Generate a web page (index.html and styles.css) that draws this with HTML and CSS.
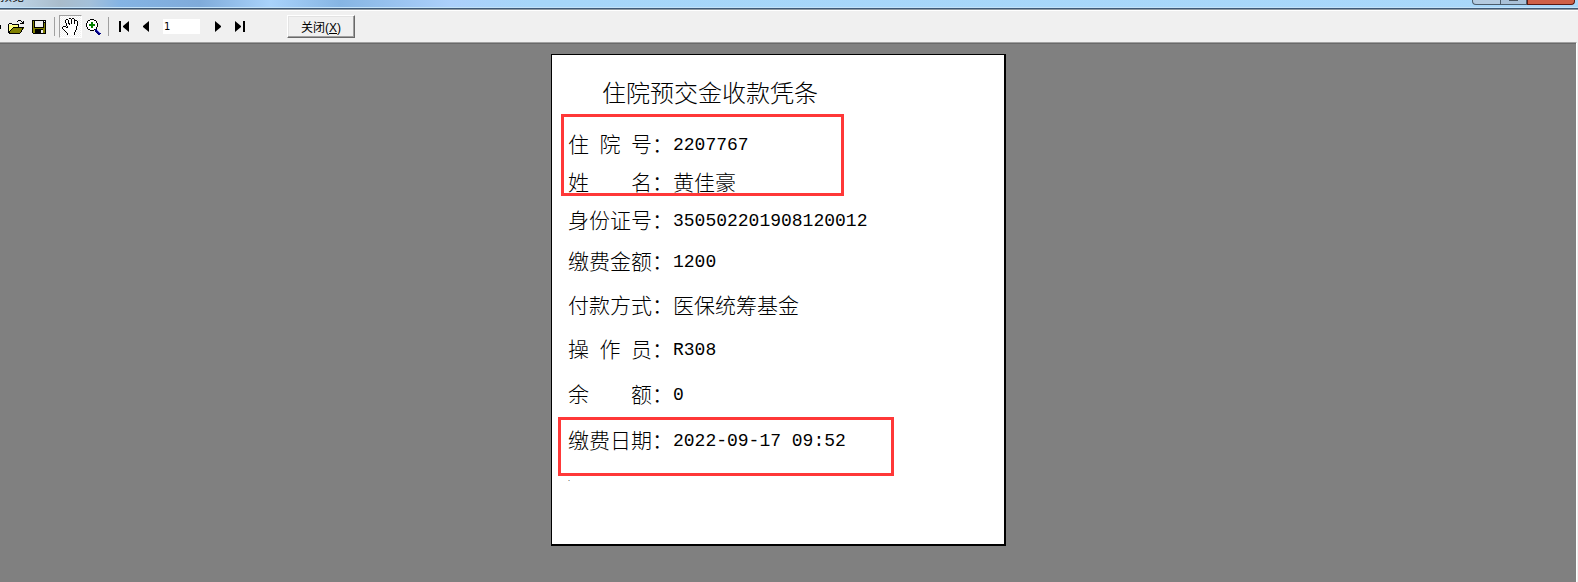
FILE: index.html
```
<!DOCTYPE html>
<html lang="zh-CN">
<head>
    <meta charset="UTF-8">
    <meta name="viewport" content="width=device-width, initial-scale=1.0">
    <title>预览</title>
    <link rel="stylesheet" href="styles.css">
</head>

<body>
    <header class="titlebar">
        <span class="caption">预览</span>
        <div class="window-buttons">
            <button class="win-btn" aria-label="最小化"></button>
            <button class="win-btn win-max" aria-label="最大化"></button>
            <button class="win-btn win-close" aria-label="关闭窗口"></button>
        </div>
    </header>

    <div class="toolbar">
        <span class="tool-edge"></span>
        <button class="tool" aria-label="打开">
            <svg width="16" height="14" viewBox="0 0 16 14" shape-rendering="crispEdges">
                <path d="M1 5h3l1-1h5v3h-5l-4 6z" fill="#ffff80"/>
                <path d="M5 8h11l-4 5h-11z" fill="#808000"/>
                <path d="M0 4h1v9h-1zM1 3h3v1h-3zM4 4h6v1h-6zM10 4h1v3h-1zM5 7h11v1h-11zM4 8h1v1h-1zM3 9h1v1h-1zM2 10h1v1h-1zM1 11h1v2h-1zM1 13h11v1h-11zM14 8h1v2h-1zM13 10h1v2h-1zM12 12h1v1h-1zM9 1h1v1h-1zM10 0h3v1h-3zM13 1h1v1h-1zM14 2h1v2h-1zM12 3h3v1h-3zM15 1h1v3h-1z" fill="#000"/>
            </svg>
        </button>
        <button class="tool" aria-label="保存">
            <svg width="14" height="14" viewBox="0 0 14 14" shape-rendering="crispEdges">
                <path d="M0 0h14v14h-13l-1-1z" fill="#000"/>
                <path d="M1 1h1v7h10v-5h1v10h-12z" fill="#808000"/>
                <path d="M3 1h8v6h-8zM12 1h1v1h-1z" fill="#f0f0f0"/>
                <path d="M3 9h8v5h-8z" fill="#000"/>
                <path d="M9 10h2v3h-2z" fill="#f0f0f0"/>
            </svg>
        </button>
        <span class="separator"></span>
        <button class="tool tool-pressed" aria-label="移动">
            <svg width="17" height="17" viewBox="0 0 17 17" shape-rendering="crispEdges">
                <path d="M4 2h2v1h1v-2h2v1h2v-1h2v2h2v2h1v6h-1v3h-1v3h-8v-2l-5-5v-2h3z" fill="#fff"/>
                <path d="M4 1h2v1h-2zM3 2h1v3h-1zM6 2h1v4h-1zM7 0h2v1h-2zM9 1h1v5h-1zM10 0h2v1h-2zM12 1h1v5h-1zM13 2h2v1h-2zM15 3h1v5h-1zM4 5h1v3h-1zM7 5h1v2h-1zM5 8h1v2h-1zM1 8h3v1h-3zM0 9h1v2h-1zM4 9h1v1h-1zM1 11h1v1h-1zM2 12h1v1h-1zM3 13h1v1h-1zM4 14h1v1h-1zM5 15h1v2h-1zM14 8h1v4h-1zM13 12h1v2h-1zM12 14h1v3h-1z" fill="#000"/>
            </svg>
        </button>
        <button class="tool tool-zoom" aria-label="放大">
            <svg width="16" height="16" viewBox="0 0 16 16" shape-rendering="crispEdges">
                <path d="M4 1h4v1h2v2h1v4h-1v2h-2v1h-4v-1h-2v-2h-1v-4h1v-2h2z" fill="#fff"/>
                <path d="M4 0h4v1h-4zM2 1h2v1h-2zM8 1h2v1h-2zM1 2h1v2h-1zM10 2h1v2h-1zM0 4h1v4h-1zM11 4h1v4h-1zM1 8h1v2h-1zM10 8h1v2h-1zM2 10h2v1h-2zM8 10h2v1h-2zM4 11h4v1h-4z" fill="#000"/>
                <path d="M5 3h2v2h2v2h-2v2h-2v-2h-2v-2h2z" fill="#008000"/>
                <path d="M9 10h2v1h1v1h1v1h1v1h1v1h-1v1h-2v-1h-1v-1h-1v-1h-1z" fill="#000080"/>
                <path d="M11 11h1v1h1v1h1v1h-1v-1h-1v-1h-1z" fill="#8080ff"/>
            </svg>
        </button>
        <span class="separator"></span>
        <button class="tool nav-first" aria-label="首页">
            <svg width="11" height="11" viewBox="0 0 11 11">
                <path d="M0 0h2v11h-2zM10 0v11l-6-5v-1z"/>
            </svg>
        </button>
        <button class="tool nav-prev" aria-label="上一页">
            <svg width="6" height="11" viewBox="0 0 6 11">
                <path d="M6 0v11l-6-5v-1z"/>
            </svg>
        </button>
        <input class="page-number" type="text" value="1" aria-label="页码">
        <button class="tool nav-next" aria-label="下一页">
            <svg width="6" height="11" viewBox="0 0 6 11">
                <path d="M0 0v11l6-5v-1z"/>
            </svg>
        </button>
        <button class="tool nav-last" aria-label="末页">
            <svg width="11" height="11" viewBox="0 0 11 11">
                <path d="M0 0v11l6-5v-1zM8 0h2v11h-2z"/>
            </svg>
        </button>
        <button class="close-preview" accesskey="x">关闭(<u>X</u>)</button>
    </div>

    <main class="preview">
        <article class="paper">
            <h1>住院预交金收款凭条</h1>
            <dl class="receipt">
                <div class="line"><dt>住  院  号：</dt><dd>2207767</dd></div>
                <div class="line"><dt>姓        名：</dt><dd class="hanzi">黄佳豪</dd></div>
                <div class="line"><dt>身份证号：</dt><dd>350502201908120012</dd></div>
                <div class="line tall"><dt>缴费金额：</dt><dd>1200</dd></div>
                <div class="line tall"><dt>付款方式：</dt><dd class="hanzi">医保统筹基金</dd></div>
                <div class="line tall"><dt>操  作  员：</dt><dd>R308</dd></div>
                <div class="line last"><dt>余        额：</dt><dd>0</dd></div>
                <div class="line last"><dt>缴费日期：</dt><dd>2022-09-17 09:52</dd></div>
            </dl>
            <p class="end-mark">.</p>
            <div class="mark mark-patient"></div>
            <div class="mark mark-date"></div>
        </article>
    </main>
</body>
</html>
```
FILE: styles.css
```
* {
    box-sizing: border-box;
}

body {
    margin: 0;
    height: 100vh;
    display: flex;
    flex-direction: column;
    background-color: #f0f0f0;
    font-family: "Liberation Sans", "Noto Sans CJK SC", sans-serif;
    font-size: 12px;
    color: #000;
    overflow: hidden;
}

button {
    padding: 0;
    border: none;
    background: none;
    font: inherit;
    color: inherit;
}

/* window frame */
.titlebar {
    flex: none;
    display: flex;
    justify-content: space-between;
    align-items: flex-end;
    height: 10px;
    padding: 0 3px 4px 0;
    overflow: hidden;
    background: linear-gradient(to right, #c4dcf0 0, #a9bccb 60px, #a3c0da 90px, #84b4e4 120px, #7fabda 200px, #a9d3fb 270px, #86b5e3 340px, #acd0fb 450px, #a6d6f9 530px, #a9d8fa 100%);
    border-bottom: 1px solid #8f979e;
    box-shadow: inset 0 -1px #3e5a78, inset 0 -2px #c3e2f8;
}

.caption {
    line-height: 16px;
}

.window-buttons {
    display: flex;
    align-self: flex-start;
}

.win-btn {
    width: 29px;
    height: 5px;
    border: 1px solid #4b5c6b;
    border-top: none;
    border-radius: 0 0 0 4px;
    background-color: #b4cbe0;
}

.win-max {
    width: 26px;
    border-left: none;
    border-radius: 0;
    background: linear-gradient(#4a5560, #4a5560) center top / 9px 1px no-repeat #a9c1d8;
}

.win-close {
    width: 48px;
    border-color: #5a1a14;
    border-radius: 0 0 4px 0;
    background-color: #cf6047;
}

/* toolbar */
.toolbar {
    flex: none;
    display: flex;
    align-items: center;
    height: 32px;
    border-top: 1px solid #fff;
}

.tool {
    display: flex;
    align-items: center;
    justify-content: center;
    margin-right: 8px;
}

.tool-edge {
    width: 1px;
    height: 4px;
    margin-right: 7px;
    background-color: #000;
}

.separator {
    width: 1px;
    height: 19px;
    background-color: #a0a0a0;
}

.tool-pressed {
    width: 23px;
    height: 23px;
    margin: 0 4px;
    border: 1px solid;
    border-color: #a0a0a0 #fff #fff #a0a0a0;
    background: repeating-conic-gradient(#fff 0 25%, #f0f0f0 0 50%) 0 0 / 2px 2px;
}

.tool-zoom {
    margin-right: 6px;
}

.nav-first {
    margin: 0 13px 0 10px;
}

.nav-prev {
    margin-right: 14px;
}

.page-number {
    width: 37px;
    height: 15px;
    padding: 0 1px;
    border: none;
    background-color: #fff;
    font-family: "DejaVu Sans", sans-serif;
    font-size: 10px;
}

.nav-next {
    margin: 0 14px 0 15px;
}

.nav-last {
    margin-right: 41px;
}

.close-preview {
    width: 68px;
    height: 23px;
    border: 1px solid;
    border-color: #fff #696969 #696969 #fff;
    box-shadow: inset -1px -1px #a0a0a0, inset 1px 1px #e3e3e3;
}

/* preview area */
.preview {
    flex: 1;
    display: flex;
    justify-content: center;
    align-items: flex-start;
    margin-right: 1px;
    padding: 11px 19px 0 0;
    background-color: #808080;
    border-top: 1px solid #a0a0a0;
    border-right: 1px solid #fff;
    box-shadow: inset 0 1px #696969;
}

.paper {
    position: relative;
    width: 455px;
    padding: 21px 16px 50px;
    background-color: #fff;
    border: 1px solid #000;
    border-width: 1px 2px 2px 1px;
    font-family: "Liberation Serif", "Noto Sans CJK SC", serif;
}

h1 {
    margin: 0 0 14px 34px;
    font-size: 24px;
    font-weight: 300;
    line-height: 36px;
}

.receipt {
    margin: 0;
    font-size: 21px;
    font-weight: 300;
}

.line {
    display: flex;
    height: 38px;
    line-height: 38px;
    white-space: pre;
}

.line.tall {
    height: 44px;
    line-height: 44px;
}

.line.last {
    height: 46px;
    line-height: 46px;
}

dt {
    width: 105px;
}

dd {
    margin: 0;
    font-family: "Liberation Mono", monospace;
    font-size: 18px;
}

dd.hanzi {
    font-family: inherit;
    font-size: 21px;
}

.end-mark {
    margin: 0;
    font-size: 8px;
    line-height: 30px;
}

/* highlight frames laid over the receipt */
.mark {
    position: absolute;
    border: 3px solid #ff3838;
}

.mark-patient {
    left: 9px;
    top: 59px;
    width: 283px;
    height: 82px;
}

.mark-date {
    left: 6px;
    top: 362px;
    width: 336px;
    height: 59px;
}
```
